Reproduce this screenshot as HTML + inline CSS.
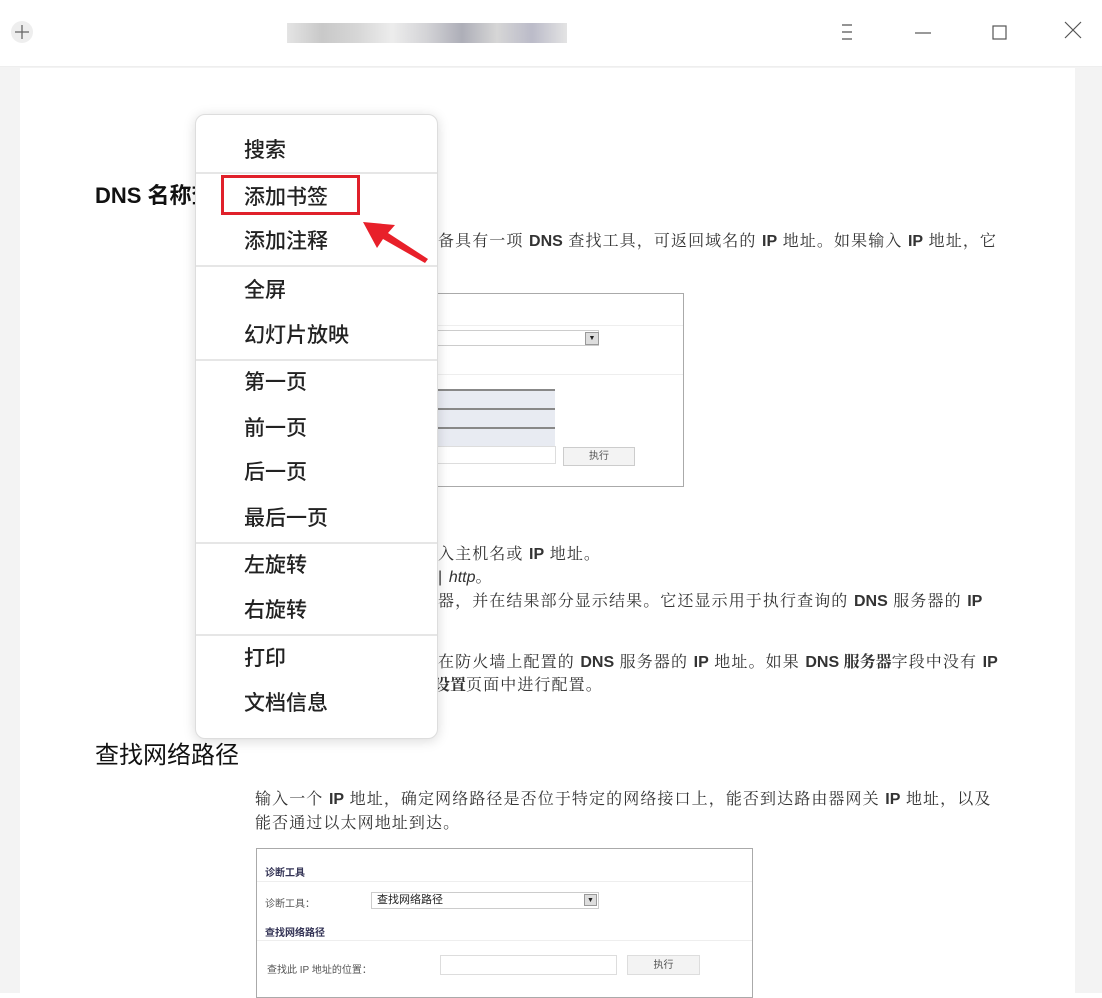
<!DOCTYPE html>
<html><head><meta charset="utf-8"><style>
*{margin:0;padding:0;box-sizing:border-box}
body{width:1102px;height:993px;overflow:hidden;background:#fff;font-family:"Liberation Sans","Noto Sans CJK SC",sans-serif;position:relative;color:#222}
.a{position:absolute;white-space:nowrap}
.top{position:absolute;left:0;top:0;width:1102px;height:67px;background:#fff;border-bottom:1px solid #eee}
.bg{position:absolute;left:0;top:67px;width:1102px;height:926px;background:#f3f3f3}
.page{position:absolute;left:20px;top:68px;width:1055px;height:925px;background:#fff}
.t{font-size:16px;letter-spacing:1.1px;color:#333;font-family:"Liberation Sans","Noto Serif CJK SC",serif}
.t b,.t i{letter-spacing:0}
.menu{position:absolute;left:195px;top:114px;width:243px;height:625px;background:#fff;border:1px solid #ddd;border-radius:10px;box-shadow:0 2px 12px rgba(0,0,0,.15)}
.mi{position:absolute;left:48px;font-size:21px;color:#222;font-weight:500}
.dv{position:absolute;left:0;width:241px;height:2px;background:#e6e6e6}
.box{position:absolute;border:1px solid #aaa;background:#fff}
</style></head><body>
<div class="top">
<svg class="a" style="left:10px;top:20px" width="24" height="24"><circle cx="12" cy="12" r="11" fill="#eee"/><path d="M12 5v14M5 12h14" stroke="#666" stroke-width="1.3"/></svg>
<div class="a" style="left:287px;top:23px;width:280px;height:20px;background:linear-gradient(90deg,#ddd,#bbb,#ccc,#e8e8e8,#c8c8cc,#999aa6,#ccc,#aab,#ddd);opacity:.8"></div>
<svg class="a" style="left:838px;top:22px" width="20" height="20"><path d="M4 3h10M4 10h10M4 17h10" stroke="#555" stroke-width="1.2"/></svg>
<svg class="a" style="left:913px;top:22px" width="20" height="20"><path d="M2 11h16" stroke="#555" stroke-width="1.2"/></svg>
<svg class="a" style="left:990px;top:22px" width="20" height="20"><rect x="3" y="4" width="13" height="13" fill="none" stroke="#555" stroke-width="1.2"/></svg>
<svg class="a" style="left:1063px;top:20px" width="20" height="20"><path d="M2 2l16 16M18 2L2 18" stroke="#555" stroke-width="1.2"/></svg>
</div>
<div class="bg"></div>
<div class="page"></div>
<div class="a" style="left:95px;top:178px;font-size:22px;font-weight:bold;color:#111">DNS 名称查找</div>
<div class="a t" style="left:438px;top:228px">备具有一项 <b>DNS</b> 查找工具，可返回域名的 <b>IP</b> 地址。如果输入 <b>IP</b> 地址，它</div>
<div class="box" style="left:420px;top:293px;width:264px;height:194px">
<div class="a" style="left:0;top:31px;width:262px;border-top:1px solid #eee"></div>
<div class="a" style="left:0;top:36px;width:178px;height:16px;border:1px solid #ccc;background:#fff"></div>
<div class="a" style="left:164px;top:38px;width:14px;height:13px;border:1px solid #999;background:#ddd;font-size:7px;text-align:center;line-height:12px">▼</div>
<div class="a" style="left:0;top:80px;width:262px;border-top:1px solid #eee"></div>
<div class="a" style="left:0;top:95px;width:134px;height:19px;background:#e8ebf2;border-top:2px solid #888"></div>
<div class="a" style="left:0;top:114px;width:134px;height:19px;background:#e8ebf2;border-top:2px solid #888"></div>
<div class="a" style="left:0;top:133px;width:134px;height:19px;background:#e8ebf2;border-top:2px solid #888"></div>
<div class="a" style="left:0;top:152px;width:135px;height:18px;border:1px solid #ddd"></div>
<div class="a" style="left:142px;top:153px;width:72px;height:19px;border:1px solid #ccc;background:#f3f3f3;font-size:10px;text-align:center;line-height:18px;color:#555">执行</div>
</div>
<div class="a t" style="left:438px;top:541px">入主机名或 <b>IP</b> 地址。</div>
<div class="a t" style="left:438px;top:564px">| <i>http</i>。</div>
<div class="a t" style="left:438px;top:588px">器，并在结果部分显示结果。它还显示用于执行查询的 <b>DNS</b> 服务器的 <b>IP</b></div>
<div class="a t" style="left:438px;top:649px">在防火墙上配置的 <b>DNS</b> 服务器的 <b>IP</b> 地址。如果 <b>DNS 服务器</b>字段中没有 <b>IP</b></div>
<div class="a t" style="left:434px;top:672px"><b>设置</b>页面中进行配置。</div>
<div class="a" style="left:95px;top:735px;font-size:24px;color:#111">查找网络路径</div>
<div class="a t" style="left:255px;top:786px">输入一个 <b>IP</b> 地址，确定网络路径是否位于特定的网络接口上，能否到达路由器网关 <b>IP</b> 地址，以及</div>
<div class="a t" style="left:255px;top:810px">能否通过以太网地址到达。</div>
<div class="box" style="left:256px;top:848px;width:497px;height:150px">
<div class="a" style="left:8px;top:15px;font-size:10px;font-weight:bold;color:#335">诊断工具</div>
<div class="a" style="left:0;top:32px;width:495px;border-top:1px solid #eee"></div>
<div class="a" style="left:8px;top:46px;font-size:10px;color:#555">诊断工具：</div>
<div class="a" style="left:114px;top:43px;width:228px;height:17px;border:1px solid #ccc;font-size:11px;padding-left:5px;line-height:15px">查找网络路径</div>
<div class="a" style="left:327px;top:45px;width:13px;height:12px;border:1px solid #999;background:#ddd;font-size:7px;text-align:center;line-height:11px">▼</div>
<div class="a" style="left:8px;top:75px;font-size:10px;font-weight:bold;color:#335">查找网络路径</div>
<div class="a" style="left:0;top:91px;width:495px;border-top:1px solid #eee"></div>
<div class="a" style="left:10px;top:112px;font-size:10px;color:#555">查找此 IP 地址的位置：</div>
<div class="a" style="left:183px;top:106px;width:177px;height:20px;border:1px solid #ddd"></div>
<div class="a" style="left:370px;top:106px;width:73px;height:20px;border:1px solid #ddd;background:#f3f3f3;font-size:10px;text-align:center;line-height:19px;color:#555">执行</div>
</div>
<div class="menu">
<div class="mi" style="top:19px">搜索</div>
<div class="dv" style="top:57px"></div>
<div class="mi" style="top:66px">添加书签</div>
<div class="mi" style="top:110px">添加注释</div>
<div class="dv" style="top:150px"></div>
<div class="mi" style="top:159px">全屏</div>
<div class="mi" style="top:204px">幻灯片放映</div>
<div class="dv" style="top:244px"></div>
<div class="mi" style="top:251px">第一页</div>
<div class="mi" style="top:297px">前一页</div>
<div class="mi" style="top:341px">后一页</div>
<div class="mi" style="top:387px">最后一页</div>
<div class="dv" style="top:427px"></div>
<div class="mi" style="top:434px">左旋转</div>
<div class="mi" style="top:479px">右旋转</div>
<div class="dv" style="top:519px"></div>
<div class="mi" style="top:527px">打印</div>
<div class="mi" style="top:572px">文档信息</div>
</div>
<div class="a" style="left:221px;top:175px;width:139px;height:40px;border:3px solid #e0202a"></div>
<svg class="a" style="left:355px;top:215px" width="80" height="50"><path d="M8 7L40 10L33 18L73 44L70 48L28 24L22 33Z" fill="#e8202a"/></svg>
</body></html>
